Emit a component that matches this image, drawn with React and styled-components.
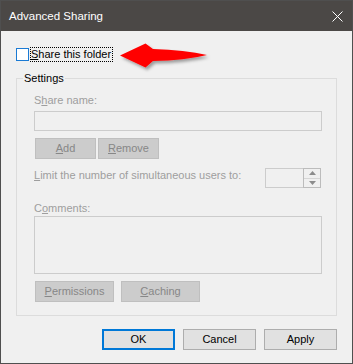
import React from "react";
import styled, { createGlobalStyle } from "styled-components";

const FONT = `"Liberation Sans", Arial, sans-serif`;

const Global = createGlobalStyle`
  html, body { margin: 0; padding: 0; background: #f0f0f0; }
  body { font-family: ${FONT}; font-size: 11px; }
  * { box-sizing: border-box; }
`;

const Window = styled.div`
  width: 353px;
  height: 364px;
  border: 1px solid #4f4f4f;
  border-top: none;
  background: #f0f0f0;
  display: flex;
  flex-direction: column;
  overflow: hidden;
`;

const TitleBar = styled.div`
  height: 31px;
  background: #4b4846;
  border-top: 1px solid #4f4f4f;
  display: flex;
  align-items: center;
  justify-content: space-between;
  padding: 0 9px 0 8px;
  color: #ffffff;
  flex-shrink: 0;
`;

const TitleText = styled.span`
  font-size: 11.5px;
  line-height: 30px;
`;

const Close = styled.svg`
  width: 11px;
  height: 11px;
  display: block;
`;

const Content = styled.div`
  padding: 0 15px;
  display: flex;
  flex-direction: column;
`;

const CheckRow = styled.div`
  position: relative;
  margin-top: 16px;
  height: 15px;
  display: flex;
  align-items: center;
  gap: 1px;
`;

const CheckBox = styled.span`
  width: 13px;
  height: 13px;
  border: 1px solid #1a7ad4;
  background: #ffffff;
  display: block;
`;

const CheckLabel = styled.label`
  height: 15px;
  border: 1px dotted #000;
  padding: 0 1px 0 0;
  line-height: 13px;
  color: #000;
  white-space: nowrap;
`;

const Arrow = styled.svg`
  position: absolute;
  left: 100px;
  top: -17px;
  width: 100px;
  height: 45px;
  overflow: visible;
`;

const Group = styled.div`
  position: relative;
  margin-top: 16px;
  border: 1px solid #dcdcdc;
  padding: 14px 14px 13px 17px;
  display: flex;
  flex-direction: column;
`;

const GroupTitle = styled.span`
  position: absolute;
  left: 6px;
  top: -8px;
  padding: 0 1px;
  line-height: 14px;
  background: #f0f0f0;
  color: #000;
`;

const Label = styled.div`
  line-height: 15px;
  color: #9e9e9e;
  white-space: nowrap;
  margin-top: ${(p) => p.$mt || 0}px;
`;

const TextField = styled.div`
  height: ${(p) => p.$h}px;
  margin-top: ${(p) => p.$mt || 0}px;
  border: 1px solid #cccccc;
  background: #f0f0f0;
`;

const ButtonRow = styled.div`
  display: flex;
  gap: ${(p) => p.$gap}px;
  margin-top: 7px;
  padding-left: 1px;
`;

const DisabledButton = styled.div`
  width: ${(p) => p.$w}px;
  height: 21px;
  background: #cccccc;
  border: 1px solid #bfbfbf;
  color: #878787;
  display: flex;
  align-items: center;
  justify-content: center;
  line-height: 15px;
`;

const LimitRow = styled.div`
  margin-top: 9px;
  display: flex;
  justify-content: space-between;
  align-items: flex-start;
`;

const Spin = styled.div`
  width: 56px;
  height: 20px;
  margin-right: 1px;
  border: 1px solid #cccccc;
  background: #f0f0f0;
  display: flex;
  justify-content: flex-end;
`;

const SpinButtons = styled.div`
  width: 18px;
  height: 20px;
  margin: -1px -1px 0 0;
  border: 1px solid #bcbcbc;
  display: flex;
  flex-direction: column;
`;

const SpinHalf = styled.div`
  flex: 1;
  display: flex;
  align-items: center;
  justify-content: center;
  border-top: ${(p) => (p.$bottom ? "1px solid #d6d6d6" : "none")};
`;

const Footer = styled.div`
  margin-top: 13px;
  display: flex;
  justify-content: flex-end;
  gap: 8px;
`;

const DialogButton = styled.button`
  width: 73px;
  height: 21px;
  padding: 0;
  font-family: ${FONT};
  font-size: 11px;
  line-height: 15px;
  color: #000;
  background: #e1e1e1;
  border: ${(p) => (p.$primary ? "2px solid #0078d7" : "1px solid #adadad")};
  border-radius: 0;
`;

const Acc = styled.u`
  text-decoration-thickness: 1px;
  text-underline-offset: 1px;
`;

export default function App() {
  return (
    <>
      <Global />
      <Window>
        <TitleBar>
          <TitleText>Advanced Sharing</TitleText>
          <Close viewBox="0 0 11 11">
            <path d="M0.5 0.5 L10.5 10.5 M10.5 0.5 L0.5 10.5" stroke="#fff" strokeWidth="1" />
          </Close>
        </TitleBar>
        <Content>
          <CheckRow>
            <CheckBox />
            <CheckLabel>
              <Acc>S</Acc>hare this folder
            </CheckLabel>
            <Arrow viewBox="116 30 100 45">
              <defs>
                <filter id="sh" x="-20%" y="-50%" width="140%" height="200%">
                  <feDropShadow dx="2" dy="2.5" stdDeviation="1.6" floodColor="#000" floodOpacity="0.35" />
                </filter>
              </defs>
              <path
                d="M120 55.5 L145.5 43.5 L153 49 Q185 50 207 55 Q185 60.5 153 61 L145.5 67.5 Z"
                fill="#ff0000"
                filter="url(#sh)"
              />
            </Arrow>
          </CheckRow>
          <Group>
            <GroupTitle>Settings</GroupTitle>
            <Label>
              S<Acc>h</Acc>are name:
            </Label>
            <TextField $h={20} $mt={3} />
            <ButtonRow $gap={2}>
              <DisabledButton $w={61}>
                <span>
                  <Acc>A</Acc>dd
                </span>
              </DisabledButton>
              <DisabledButton $w={61}>
                <span>
                  <Acc>R</Acc>emove
                </span>
              </DisabledButton>
            </ButtonRow>
            <LimitRow>
              <Label>
                <Acc>L</Acc>imit the number of simultaneous users to:
              </Label>
              <Spin>
                <SpinButtons>
                  <SpinHalf>
                    <svg width="7" height="4" viewBox="0 0 7 4">
                      <path d="M0 4 L3.5 0 L7 4 Z" fill="#8c8c8c" />
                    </svg>
                  </SpinHalf>
                  <SpinHalf $bottom>
                    <svg width="7" height="4" viewBox="0 0 7 4">
                      <path d="M0 0 L7 0 L3.5 4 Z" fill="#8c8c8c" />
                    </svg>
                  </SpinHalf>
                </SpinButtons>
              </Spin>
            </LimitRow>
            <Label $mt={13}>
              C<Acc>o</Acc>mments:
            </Label>
            <TextField $h={58} />
            <ButtonRow $gap={7}>
              <DisabledButton $w={79}>
                <span>
                  <Acc>P</Acc>ermissions
                </span>
              </DisabledButton>
              <DisabledButton $w={79}>
                <span>
                  <Acc>C</Acc>aching
                </span>
              </DisabledButton>
            </ButtonRow>
          </Group>
          <Footer>
            <DialogButton $primary>OK</DialogButton>
            <DialogButton>Cancel</DialogButton>
            <DialogButton>Apply</DialogButton>
          </Footer>
        </Content>
      </Window>
    </>
  );
}
